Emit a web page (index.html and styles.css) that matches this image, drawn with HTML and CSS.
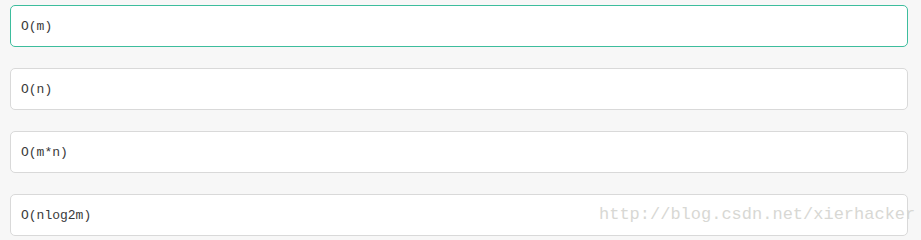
FILE: index.html
```html
<!DOCTYPE html>
<html lang="en">
<head>
    <meta charset="UTF-8">
    <title>Options</title>
    <link rel="stylesheet" href="styles.css">
</head>
<body>
    <div class="options">
        <div class="option selected">O(m)</div>
        <div class="option">O(n)</div>
        <div class="option">O(m*n)</div>
        <div class="option">O(nlog2m)</div>
    </div>
    <div class="watermark">http://blog.csdn.net/xierhacker</div>
</body>
</html>
```
FILE: styles.css
```css
body {
    margin: 0;
    background-color: #f7f7f7;
    font-family: "Liberation Mono", "Courier New", monospace;
}
.options {
    display: flex;
    flex-direction: column;
    gap: 21px;
    padding: 5px 13px 0 10px;
}
.option {
    height: 40px;
    display: flex;
    align-items: center;
    padding-left: 10px;
    background-color: #fff;
    border: 1px solid #d9d9d9;
    border-radius: 5px;
    font-size: 13px;
    color: #3a3a3a;
}
.option.selected {
    border-color: #3dbd9d;
}
.watermark {
    position: absolute;
    left: 599px;
    top: 205px;
    font-size: 17px;
    color: #d8d8d4;
    white-space: nowrap;
}
```
